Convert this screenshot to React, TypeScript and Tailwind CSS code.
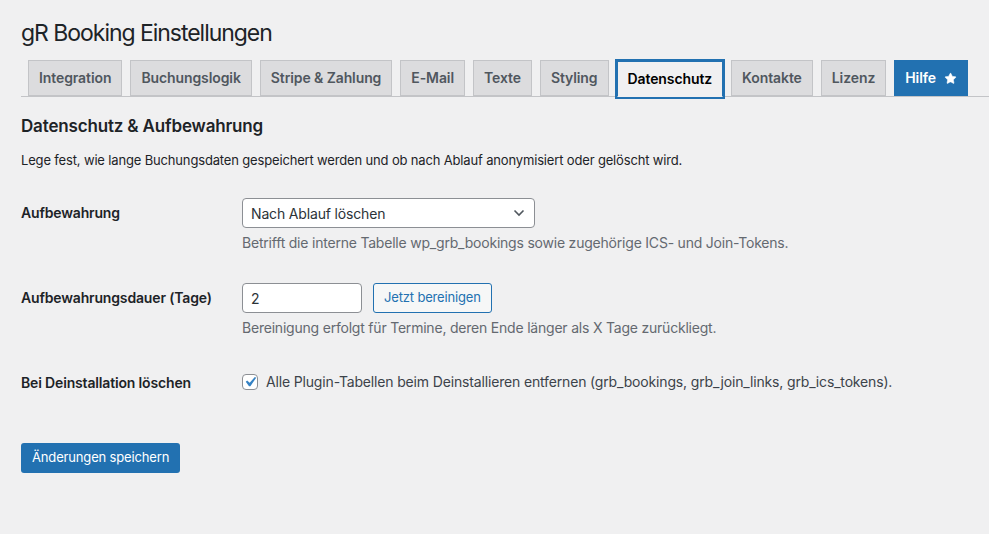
import { Star } from 'lucide-react';

const tabs = [
  'Integration',
  'Buchungslogik',
  'Stripe & Zahlung',
  'E-Mail',
  'Texte',
  'Styling',
  'Datenschutz',
  'Kontakte',
  'Lizenz',
];

const font = { fontFamily: 'Inter, "Noto Sans", "Liberation Sans", sans-serif' };

function Tab({ label }: { label: string }) {
  const active = label === 'Datenschutz';
  return (
    <div
      className={
        'h-[36px] px-[10px] flex items-center border text-[14px] font-semibold leading-[24px] tracking-[-0.007em] ' +
        (active
          ? 'bg-[#f0f0f1] border-[#2271b1] border-b-[#f0f0f1] text-[#000] outline-2 outline-[#2271b1] -mb-px z-10'
          : 'bg-[#dcdcde] border-[#c3c4c7] text-[#50575e]')
      }
    >
      {label}
    </div>
  );
}

function Row({ label, children }: { label: string; children: React.ReactNode }) {
  return (
    <div className="flex">
      <div className="w-[221px] shrink-0 pt-[21px] pb-[20px] pr-[10px] text-[14px] font-semibold leading-[18px] text-[#1d2327]">
        {label}
      </div>
      <div className="flex-1 py-[15px]">{children}</div>
    </div>
  );
}

export default function App() {
  return (
    <div
      className="w-[989px] h-[534px] bg-[#f0f0f1] overflow-hidden text-[#3c434a] tracking-[-0.01em]"
      style={font}
    >
      <div className="pl-[21px]">
        <h1 className="pt-[18px] text-[23px] leading-[30px] font-normal tracking-[-0.045em] text-[#1d2327]">
          gR Booking Einstellungen
        </h1>

        <div className="mt-[13px] flex items-end gap-[8px] pl-[7px] border-b border-[#c3c4c7] h-[36px]">
          {tabs.map((t) => (
            <Tab key={t} label={t} />
          ))}
          <div className="h-[36px] px-[10px] flex items-center gap-[8px] border border-[#2271b1] bg-[#2271b1] text-white text-[14px] font-semibold leading-[24px] tracking-[-0.007em]">
            Hilfe
            <Star size={13} fill="white" strokeWidth={1} />
          </div>
        </div>

        <h2 className="mt-[17px] text-[17px] leading-[24px] font-semibold text-[#1d2327]">Datenschutz &amp; Aufbewahrung</h2>
        <p className="mt-[12px] text-[13px] leading-[20px] text-[#1d2327]">
          Lege fest, wie lange Buchungsdaten gespeichert werden und ob nach Ablauf anonymisiert oder gelöscht wird.
        </p>

        <div className="mt-[13px]">
          <Row label="Aufbewahrung">
            <div className="w-[293px] h-[30px] bg-white border border-[#8c8f94] rounded-[4px] flex items-center justify-between pl-[8px] pr-[9px] text-[14px] text-[#2c3338]">
              <span>Nach Ablauf löschen</span>
              <svg width="12" height="8" viewBox="0 0 12 8" fill="none">
                <path d="M1.5 1.5 L6 6 L10.5 1.5" stroke="#50575e" strokeWidth="1.6" />
              </svg>
            </div>
            <p className="mt-[4px] text-[14px] leading-[21px] tracking-[-0.015em] text-[#646970]">
              Betrifft die interne Tabelle wp_grb_bookings sowie zugehörige ICS- und Join-Tokens.
            </p>
          </Row>

          <Row label="Aufbewahrungsdauer (Tage)">
            <div className="flex items-center gap-[11px]">
              <div className="w-[120px] h-[30px] bg-white border border-[#8c8f94] rounded-[4px] flex items-center px-[8px] text-[14px] text-[#2c3338]">
                2
              </div>
              <div className="h-[30px] px-[10px] flex items-center border border-[#2271b1] bg-[#f6f7f7] rounded-[3px] text-[13px] text-[#2271b1]">
                Jetzt bereinigen
              </div>
            </div>
            <p className="mt-[4px] text-[14px] leading-[21px] tracking-[-0.015em] text-[#646970]">
              Bereinigung erfolgt für Termine, deren Ende länger als X Tage zurückliegt.
            </p>
          </Row>

          <Row label="Bei Deinstallation löschen">
            <div className="flex items-center gap-[8px] pt-[3px] text-[14px] leading-[22px] text-[#3c434a]">
              <div className="w-[16px] h-[16px] bg-white border border-[#8c8f94] rounded-[4px] flex items-center justify-center overflow-visible">
                <svg width="20" height="20" viewBox="0 0 20 20" className="shrink-0 -m-[3px]">
                  <path d="M14.83 4.89l1.34.94-5.81 8.38H9.02L5.78 9.67l1.34-1.25 2.57 2.4z" fill="#3582c4" />
                </svg>
              </div>
              <span>Alle Plugin-Tabellen beim Deinstallieren entfernen (grb_bookings, grb_join_links, grb_ics_tokens).</span>
            </div>
          </Row>
        </div>

        <div className="mt-[31px]">
          <div className="inline-flex h-[30px] items-center px-[11px] bg-[#2271b1] rounded-[3px] text-white text-[13px]">
            Änderungen speichern
          </div>
        </div>
      </div>
    </div>
  );
}
